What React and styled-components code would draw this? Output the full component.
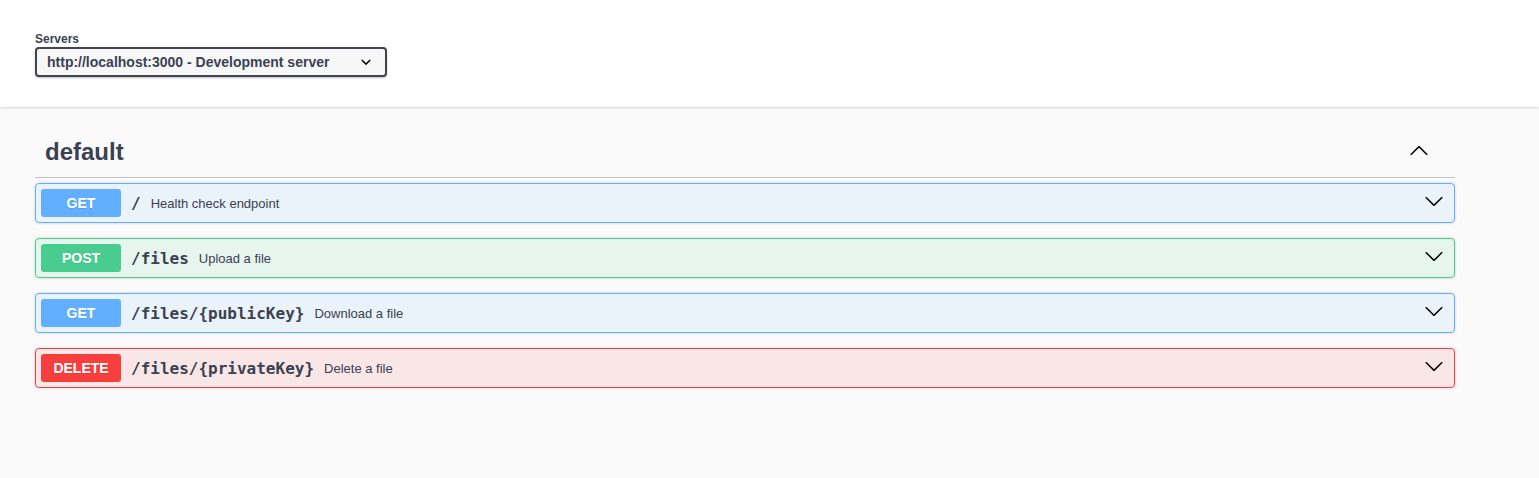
import React from 'react';
import styled, { createGlobalStyle } from 'styled-components';

const GlobalStyle = createGlobalStyle`
  html, body {
    margin: 0;
    padding: 0;
    background: #fafafa;
    font-family: "Liberation Sans", Arial, sans-serif;
    color: #3b4151;
  }
`;

const methods = {
  GET: { color: '#61affe', bg: 'rgba(97,175,254,.1)' },
  POST: { color: '#49cc90', bg: 'rgba(73,204,144,.1)' },
  DELETE: { color: '#f93e3e', bg: 'rgba(249,62,62,.1)' },
};

const operations = [
  { method: 'GET', path: '/', summary: 'Health check endpoint' },
  { method: 'POST', path: '/files', summary: 'Upload a file' },
  { method: 'GET', path: '/files/{publicKey}', summary: 'Download a file' },
  { method: 'DELETE', path: '/files/{privateKey}', summary: 'Delete a file' },
];

const Page = styled.div`
  min-height: 100vh;
  background: #fafafa;
`;

const SchemeContainer = styled.section`
  background: #fff;
  box-shadow: 0 1px 2px 0 rgba(0, 0, 0, 0.15);
  padding: 30px 0;
  margin: 0 0 20px;
`;

const Wrapper = styled.div`
  box-sizing: border-box;
  width: 1420px;
  margin-left: 35px;
`;

const ServersTitle = styled.span`
  display: block;
  font-size: 12px;
  font-weight: 700;
  line-height: 15px;
  padding-top: 2px;
`;

const Select = styled.div`
  box-sizing: border-box;
  display: flex;
  align-items: center;
  width: 352px;
  height: 30px;
  padding: 0 10px;
  border: 2px solid #41444e;
  border-radius: 4px;
  background: #f7f7f7;
  box-shadow: 0 1px 2px 0 rgba(0, 0, 0, 0.25);
  font-size: 14px;
  font-weight: 700;
  color: #3b4151;

  span {
    flex: 1;
  }
  svg {
    margin-right: -1px;
  }
`;

const TagHeading = styled.h3`
  display: flex;
  align-items: center;
  height: 30px;
  margin: 0 0 5px;
  padding: 10px 26px 10px 10px;
  border-bottom: 1px solid rgba(59, 65, 81, 0.3);
  font-size: 24px;
  font-weight: 700;
  color: #3b4151;

  span {
    flex: 1;
  }
  svg {
    margin-bottom: 5px;
  }
`;

const Opblock = styled.div`
  box-sizing: border-box;
  display: flex;
  align-items: center;
  height: 40px;
  margin: 0 0 15px;
  padding: 5px;
  border: 1px solid ${(p) => p.$color};
  border-radius: 4px;
  background: ${(p) => p.$bg};
  box-shadow: 0 0 3px rgba(0, 0, 0, 0.19);
`;

const Method = styled.span`
  box-sizing: border-box;
  min-width: 80px;
  padding: 6px 0;
  border-radius: 3px;
  background: ${(p) => p.$color};
  color: #fff;
  font-size: 14px;
  font-weight: 700;
  line-height: 16px;
  text-align: center;
  text-shadow: 0 1px 0 rgba(0, 0, 0, 0.1);
`;

const Path = styled.span`
  padding: 0 10px;
  font-family: "DejaVu Sans Mono", monospace;
  font-size: 16px;
  font-weight: 600;
  color: #3b4151;
`;

const Summary = styled.span`
  flex: 1;
  font-size: 13px;
  color: #3b4151;
`;

const Arrow = styled.svg`
  width: 20px;
  height: 20px;
  margin: 0 5px 5px 0;
  fill: #000;
`;

const down = 'M17.418 6.109c.272-.268.709-.268.979 0s.271.701 0 .969l-7.908 7.83c-.27.268-.707.268-.979 0l-7.908-7.83c-.27-.268-.27-.701 0-.969.271-.268.709-.268.979 0L10 13.25l7.418-7.141z';
const up = 'M17.418 14.908c.272.268.709.268.979 0s.271-.701 0-.969l-7.908-7.83c-.27-.268-.707-.268-.979 0l-7.908 7.83c-.27.268-.27.701 0 .969.271.268.709.268.979 0L10 7.767l7.418 7.141z';

export default function App() {
  return (
    <Page>
      <GlobalStyle />
      <SchemeContainer>
        <Wrapper>
          <ServersTitle>Servers</ServersTitle>
          <Select>
            <span>http://localhost:3000 - Development server</span>
            <svg width="20" height="20" viewBox="0 0 20 20">
              <path d="M13.418 7.859a.695.695 0 01.978 0 .68.68 0 010 .969l-3.908 3.83a.697.697 0 01-.979 0l-3.908-3.830a.68.68 0 010-.969.695.695 0 01.978 0L10 11l3.418-3.141z" />
            </svg>
          </Select>
        </Wrapper>
      </SchemeContainer>
      <Wrapper>
        <TagHeading>
          <span>default</span>
          <svg width="20" height="20" viewBox="0 0 20 20">
            <path d={up} />
          </svg>
        </TagHeading>
        {operations.map((op, i) => (
          <Opblock key={i} $color={methods[op.method].color} $bg={methods[op.method].bg}>
            <Method $color={methods[op.method].color}>{op.method}</Method>
            <Path>{op.path}</Path>
            <Summary>{op.summary}</Summary>
            <Arrow viewBox="0 0 20 20">
              <path d={down} />
            </Arrow>
          </Opblock>
        ))}
      </Wrapper>
    </Page>
  );
}
